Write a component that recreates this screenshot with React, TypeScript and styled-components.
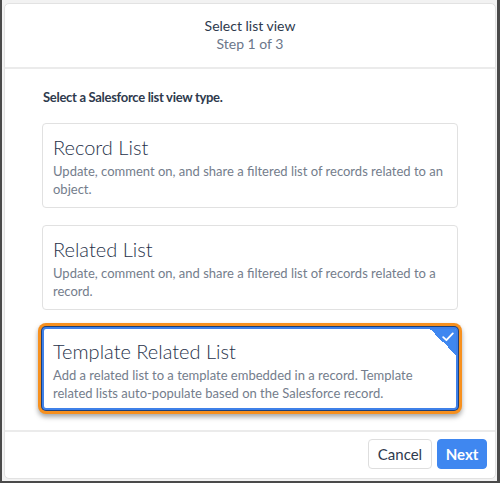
import React from "react";
import styled, { createGlobalStyle } from "styled-components";

const Global = createGlobalStyle`
  html, body { margin: 0; padding: 0; background: #f4f4f4; }
  * { box-sizing: border-box; }
  body { font-family: Lato, "Open Sans", "Liberation Sans", sans-serif; }
`;

const Frame = styled.div`
  width: 500px;
  height: 483px;
  background: #f2f2f2;
  border-left: 2px solid #4a4a4a;
  border-right: 3px solid #4a4a4a;
  border-bottom: 2px solid #4a4a4a;
  padding: 3px 1px 2px 2px;
  display: flex;
`;

const Modal = styled.div`
  flex: 1;
  background: #fff;
  border: 1px solid #e2e2e2;
  border-radius: 5px;
  display: flex;
  flex-direction: column;
`;

const Header = styled.div`
  display: flex;
  flex-direction: column;
  align-items: center;
  padding: 13px 0 14px;
  border-bottom: 2px solid #ebebeb;
`;

const Title = styled.div`
  font-size: 14px;
  line-height: 18px;
  color: #2e3a4d;
`;

const Subtitle = styled.div`
  font-size: 14px;
  line-height: 18px;
  color: #6b778a;
`;

const Body = styled.div`
  flex: 1;
  padding: 19px 37px 0;
  display: flex;
  flex-direction: column;
`;

const Intro = styled.div`
  font-size: 13px;
  line-height: 18px;
  font-weight: 700;
  letter-spacing: -0.3px;
  color: #2e3a4d;
  padding-left: 1px;
  margin-bottom: 17px;
`;

const Cards = styled.div`
  display: flex;
  flex-direction: column;
  gap: 17px;
`;

const Card = styled.div<{ $selected?: boolean }>`
  position: relative;
  border-radius: 4px;
  height: ${(p) => (p.$selected ? "83px" : "85px")};
  border: ${(p) => (p.$selected ? "2px solid #3f80e8" : "1px solid #e1e1e1")};
  padding: ${(p) => (p.$selected ? "10px 9px 0" : "11px 10px 0")};
  background: #fff;
  box-shadow: ${(p) =>
    p.$selected
      ? "0 0 0 1px #1d3f78, 0 0 0 4px #f7901e, 0 3px 5px 4px rgba(0,0,0,0.35)"
      : "none"};
`;

const CardTitle = styled.div`
  font-size: 20px;
  line-height: 24px;
  font-weight: 300;
  color: #27324a;
  margin-bottom: 3px;
`;

const CardDesc = styled.div`
  font-size: 13px;
  line-height: 18px;
  color: #747d8c;
`;

const Corner = styled.div`
  position: absolute;
  top: 0;
  right: 0;
  width: 26px;
  height: 26px;
  border-top-right-radius: 1px;
  background: linear-gradient(to bottom left, #3f87f0 50%, transparent 50%);
`;

const Check = styled.svg`
  position: absolute;
  top: 3px;
  right: 2px;
`;

const Footer = styled.div`
  display: flex;
  justify-content: flex-end;
  gap: 5px;
  padding: 7px 8px 9px;
  border-top: 2px solid #ebebeb;
`;

const Button = styled.button<{ $primary?: boolean }>`
  height: 30px;
  width: ${(p) => (p.$primary ? "50px" : "64px")};
  padding: 0;
  border-radius: 4px;
  font-family: Lato, "Open Sans", "Liberation Sans", sans-serif;
  font-size: 15px;
  font-weight: ${(p) => (p.$primary ? 700 : 400)};
  border: 1px solid ${(p) => (p.$primary ? "#3f87f0" : "#dedede")};
  background: ${(p) => (p.$primary ? "#3f87f0" : "#fff")};
  color: ${(p) => (p.$primary ? "#fff" : "#2e3a4d")};
`;

const items = [
  {
    title: "Record List",
    desc: "Update, comment on, and share a filtered list of records related to an object.",
  },
  {
    title: "Related List",
    desc: "Update, comment on, and share a filtered list of records related to a record.",
  },
  {
    title: "Template Related List",
    desc: "Add a related list to a template embedded in a record. Template related lists auto-populate based on the Salesforce record.",
    selected: true,
  },
];

export default function App() {
  return (
    <>
      <Global />
      <Frame>
        <Modal>
          <Header>
            <Title>Select list view</Title>
            <Subtitle>Step 1 of 3</Subtitle>
          </Header>
          <Body>
            <Intro>Select a Salesforce list view type.</Intro>
            <Cards>
              {items.map((it) => (
                <Card key={it.title} $selected={it.selected}>
                  {it.selected && (
                    <Corner>
                      <Check width="12" height="10" viewBox="0 0 12 10">
                        <path d="M1.2 5.2 L4.4 8.2 L10.8 1.4" fill="none" stroke="#fff" strokeWidth="1.8" strokeLinecap="round" strokeLinejoin="round" />
                      </Check>
                    </Corner>
                  )}
                  <CardTitle>{it.title}</CardTitle>
                  <CardDesc>{it.desc}</CardDesc>
                </Card>
              ))}
            </Cards>
          </Body>
          <Footer>
            <Button>Cancel</Button>
            <Button $primary>Next</Button>
          </Footer>
        </Modal>
      </Frame>
    </>
  );
}
